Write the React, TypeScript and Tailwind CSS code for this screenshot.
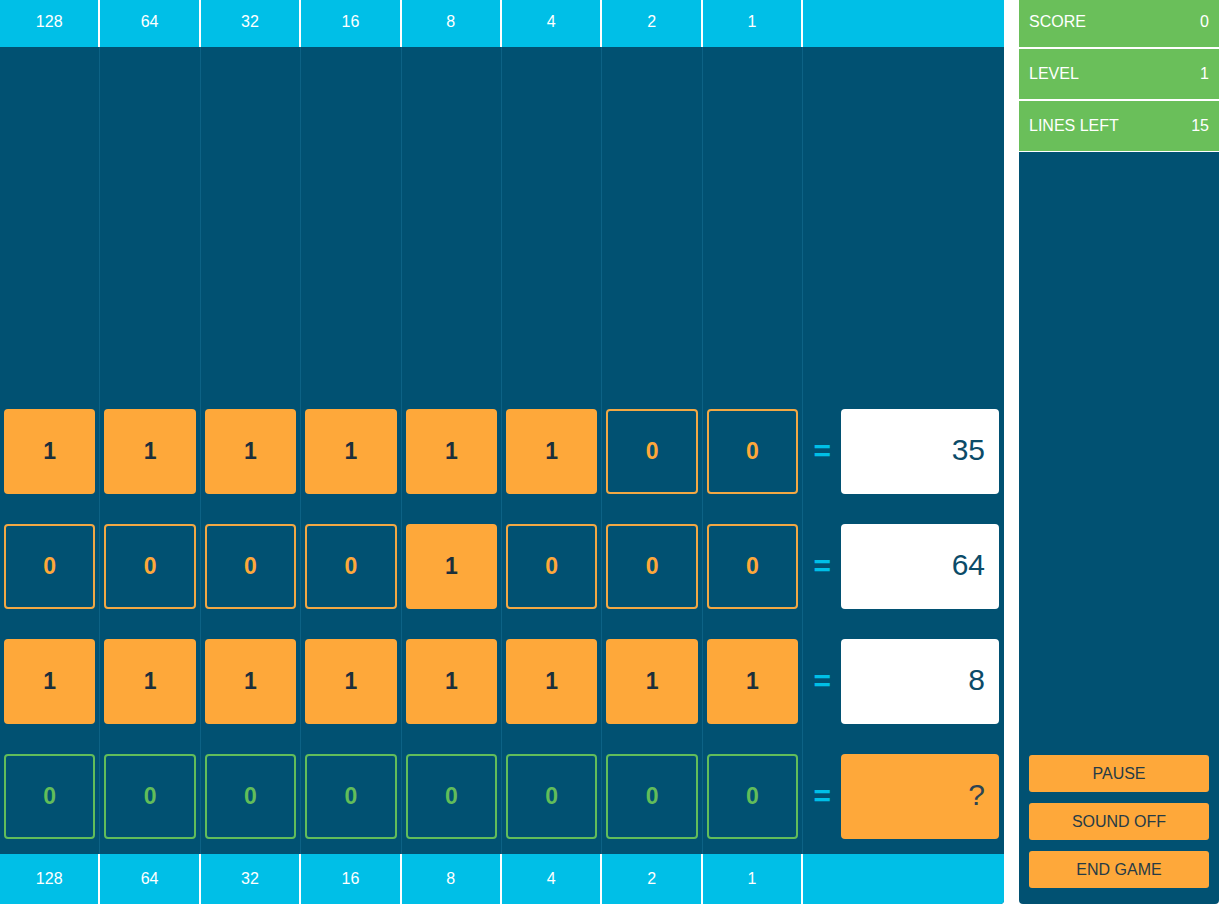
import React from 'react';

const weights = [128, 64, 32, 16, 8, 4, 2, 1];

type Row = { bits: number[]; result: string; kind: 'done' | 'active' };

const rows: Row[] = [
  { bits: [1, 1, 1, 1, 1, 1, 0, 0], result: '35', kind: 'done' },
  { bits: [0, 0, 0, 0, 1, 0, 0, 0], result: '64', kind: 'done' },
  { bits: [1, 1, 1, 1, 1, 1, 1, 1], result: '8', kind: 'done' },
  { bits: [0, 0, 0, 0, 0, 0, 0, 0], result: '?', kind: 'active' },
];

const cols = 'grid grid-cols-[repeat(8,minmax(0,1fr))_minmax(0,2fr)]';

function WeightBar() {
  return (
    <div className={`${cols} h-[50px] bg-[#00bfe7]`}>
      {weights.map((w) => (
        <div key={w} className="flex items-center justify-center border-r-2 border-white text-[16px] text-white">
          {w}
        </div>
      ))}
      <div />
    </div>
  );
}

function Bit({ value, kind }: { value: number; kind: Row['kind'] }) {
  if (kind === 'active') {
    return (
      <div className="flex h-[85px] items-center justify-center rounded-[4px] border-2 border-[#62bd5a] pb-[1px] text-[23px] font-bold text-[#62bd5a]">
        {value}
      </div>
    );
  }
  if (value === 1) {
    return (
      <div className="flex h-[85px] items-center justify-center rounded-[4px] bg-[#fea83a] pb-[1px] text-[23px] font-bold text-[#1c2f3a]">
        1
      </div>
    );
  }
  return (
    <div className="flex h-[85px] items-center justify-center rounded-[4px] border-2 border-[#f2a844] pb-[1px] text-[23px] font-bold text-[#fea83a]">
      0
    </div>
  );
}

function BitRow({ row }: { row: Row }) {
  return (
    <div className={`${cols} h-[115px]`}>
      {row.bits.map((b, i) => (
        <div key={i} className="border-r border-[#0d6285] px-[4px] pt-[15px]">
          <Bit value={b} kind={row.kind} />
        </div>
      ))}
      <div className="flex items-start pt-[15px] pr-[5px]">
        <div className="flex h-[85px] w-[38px] items-center justify-center pb-[2px] text-[30px] font-bold text-[#00bfe7]">=</div>
        <div
          className={`flex h-[85px] flex-1 items-center justify-end rounded-[4px] pr-[14px] pb-[5px] text-[30px] ${
            row.kind === 'active' ? 'bg-[#fea83a] text-[#2b4352]' : 'bg-white text-[#0b4b68]'
          }`}
        >
          {row.result}
        </div>
      </div>
    </div>
  );
}

function Stat({ label, value }: { label: string; value: string }) {
  return (
    <div className="flex h-[50px] items-center justify-between bg-[#6abf5a] px-[10px] text-[16px] text-white">
      <span>{label}</span>
      <span>{value}</span>
    </div>
  );
}

function PanelButton({ children }: { children: React.ReactNode }) {
  return (
    <button className="flex h-[37px] w-full items-center justify-center rounded-[3px] bg-[#fea83a] text-[16px] text-[#263b46]">
      {children}
    </button>
  );
}

export default function App() {
  return (
    <div className="bg-white font-['Liberation_Sans',Arial,sans-serif]">
      <div className="-mt-[3px] flex h-[907px] w-[1220px]">
        <div className="flex w-[1004px] flex-col overflow-hidden rounded-br-[4px] bg-[#015172]">
          <WeightBar />
          <div className="flex flex-1 flex-col">
            <div className={`${cols} flex-1`}>
              {weights.map((w) => (
                <div key={w} className="border-r border-[#0d6285]" />
              ))}
              <div />
            </div>
            {rows.map((r, i) => (
              <BitRow key={i} row={r} />
            ))}
          </div>
          <WeightBar />
        </div>

        <div className="ml-[15px] flex w-[200px] flex-col rounded-b-[4px] bg-[#015172]">
          <div className="flex flex-col gap-[2px] bg-white pb-[1px]">
            <Stat label="SCORE" value="0" />
            <Stat label="LEVEL" value="1" />
            <Stat label="LINES LEFT" value="15" />
          </div>
          <div className="flex-1" />
          <div className="flex flex-col gap-[11px] px-[10px] pb-[16px]">
            <PanelButton>PAUSE</PanelButton>
            <PanelButton>SOUND OFF</PanelButton>
            <PanelButton>END GAME</PanelButton>
          </div>
        </div>
      </div>
    </div>
  );
}
